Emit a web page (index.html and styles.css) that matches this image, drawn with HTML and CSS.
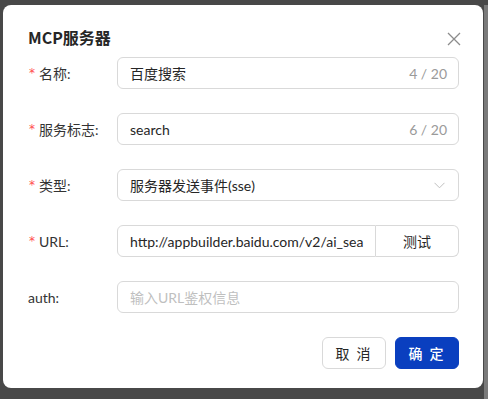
FILE: index.html
```html
<!DOCTYPE html>
<html lang="zh-CN">
<head>
<meta charset="utf-8">
<link rel="stylesheet" href="styles.css">
</head>
<body>
<div class="stage">
  <div class="dialog">
    <div class="header">
      <div class="title">MCP服务器</div>
      <svg class="close" width="14" height="14" viewBox="0 0 14 14"><path d="M1 1L13 13M13 1L1 13" stroke="#8c8c8c" stroke-width="1.3" fill="none"/></svg>
    </div>
    <div class="form">
      <div class="row">
        <label class="label"><span class="req">*</span>名称:</label>
        <div class="input"><span class="val">百度搜索</span><span class="count">4 / 20</span></div>
      </div>
      <div class="row">
        <label class="label"><span class="req">*</span>服务标志:</label>
        <div class="input"><span class="val">search</span><span class="count">6 / 20</span></div>
      </div>
      <div class="row">
        <label class="label"><span class="req">*</span>类型:</label>
        <div class="input"><span class="val">服务器发送事件(sse)</span>
          <svg class="arrow" width="11" height="7" viewBox="0 0 11 7"><path d="M0.5 0.8L5.5 5.8L10.5 0.8" stroke="#bfbfbf" stroke-width="1" fill="none"/></svg>
        </div>
      </div>
      <div class="row">
        <label class="label"><span class="req">*</span>URL:</label>
        <div class="group">
          <div class="input grouped"><span class="val clip">http://appbuilder.baidu.com/v2/ai_sea</span></div>
          <div class="addon">测试</div>
        </div>
      </div>
      <div class="row">
        <label class="label">auth:</label>
        <div class="input"><span class="ph">输入URL鉴权信息</span></div>
      </div>
    </div>
    <div class="footer">
      <button class="btn">取 消</button>
      <button class="btn primary">确 定</button>
    </div>
  </div>
  <div class="strip"></div>
</div>
</body>
</html>
```
FILE: styles.css
```css
html, body {
  margin: 0;
  padding: 0;
  background: #484848;
}
body {
  width: 488px;
  height: 399px;
  overflow: hidden;
  font-family: Lato, "Noto Sans CJK SC", sans-serif;
}
.stage {
  display: flex;
  align-items: flex-start;
  padding-top: 5px;
  padding-left: 3px;
  gap: 1px;
}
.dialog {
  width: 480px;
  height: 383px;
  box-sizing: border-box;
  background: #fff;
  border-radius: 8px;
  padding: 20px 24px 0 25px;
}
.strip {
  width: 4px;
  height: 394px;
  background: #7a7a7a;
}
.header {
  display: flex;
  justify-content: space-between;
  align-items: center;
  height: 24px;
  margin-bottom: 8px;
}
.title {
  font-size: 16px;
  font-weight: 700;
  color: #262626;
  line-height: 24px;
  font-family: "Noto Sans CJK SC", sans-serif;
}
.close {
  margin-right: -2px;
  margin-top: 3px;
}
.form {
  display: flex;
  flex-direction: column;
  gap: 24px;
}
.row {
  display: flex;
  align-items: center;
  height: 32px;
}
.label {
  width: 89px;
  flex: none;
  font-size: 14px;
  color: #333;
  display: flex;
  align-items: center;
}
.req {
  color: #ff4d4f;
  width: 10px;
  margin-left: 1px;
  font-family: "DejaVu Sans", sans-serif;
  font-size: 12px;
}
.input {
  flex: 1;
  height: 32px;
  box-sizing: border-box;
  border: 1px solid #d9d9d9;
  border-radius: 6px;
  padding: 0 11px 0 12px;
  display: flex;
  align-items: center;
  justify-content: space-between;
  font-size: 14px;
  color: #262626;
  min-width: 0;
}
.val {
  white-space: nowrap;
}
.clip {
  overflow: hidden;
  flex: 1;
  min-width: 0;
}
.count {
  color: #9a9a9a;
  font-size: 14px;
}
.ph {
  color: #bfbfbf;
}
.arrow {
  margin-right: 2px;
}
.group {
  flex: 1;
  display: flex;
  height: 32px;
  min-width: 0;
}
.input.grouped {
  border-radius: 6px 0 0 6px;
  justify-content: flex-start;
}
.addon {
  width: 83px;
  flex: none;
  box-sizing: border-box;
  border: 1px solid #d9d9d9;
  border-left: none;
  border-radius: 0 6px 6px 0;
  display: flex;
  align-items: center;
  justify-content: center;
  font-size: 14px;
  color: #262626;
}
.footer {
  display: flex;
  justify-content: flex-end;
  gap: 9px;
  margin-top: 24px;
}
.btn {
  width: 64px;
  height: 32px;
  border-radius: 6px;
  border: 1px solid #d9d9d9;
  background: #fff;
  font-family: "Noto Sans CJK SC", sans-serif;
  font-size: 14px;
  color: #262626;
  letter-spacing: 2px;
  padding: 0;
}
.btn.primary {
  background: #0a3fbf;
  border-color: #0a3fbf;
  color: #fff;
  font-weight: 500;
}
```
